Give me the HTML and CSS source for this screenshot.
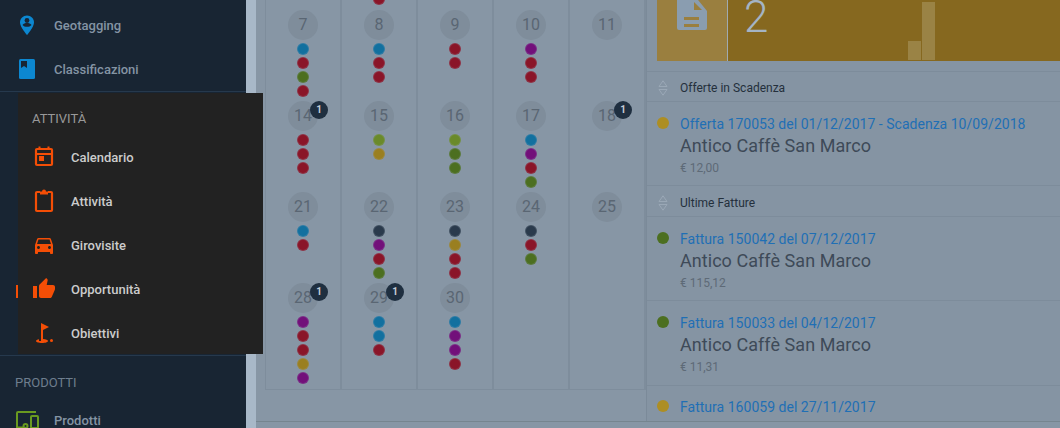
FILE: index.html
```html
<!DOCTYPE html>
<html lang="en">
<head>
    <meta charset="UTF-8">
    <title>dashboard</title>
    <link rel="stylesheet" href="styles.css">
</head>
<body>
    <div class="page">
        <div class="sidebar">
            <div class="side-group first">
                <div class="side-item">
                    <svg class="ico" viewBox="0 0 24 24"><path fill="#0c87d0" d="M12 2.500c-3.900 0-7 3.100-7 7 0 4.600 7 12.500 7 12.500s7-7.900 7-12.500c0-3.900-3.100-7-7-7z"/><circle cx="12" cy="7.500" r="2.400" fill="#182533"/><path fill="#182533" d="M7.500 12c1-1.400 2.700-1.900 4.500-1.900s3.500.5 4.500 1.900c-1 1.300-2.700 1.800-4.500 1.800s-3.500-.5-4.500-1.800z"/></svg>
                    <span>Geotagging</span>
                </div>
                <div class="side-item">
                    <svg class="ico" viewBox="0 0 24 24"><rect x="4" y="2" width="16" height="20" rx="1.500" fill="#0c87d0"/><path fill="#182533" d="M6 4h6v7l-3-2-3 2z"/></svg>
                    <span>Classificazioni</span>
                </div>
            </div>
            <div class="side-group covered">
                <div class="peek"></div>
            </div>
            <div class="side-group">
                <h4 class="side-title">PRODOTTI</h4>
                <div class="side-item">
                    <svg class="ico" viewBox="0 0 24 24" fill="none" stroke="#6a9a20" stroke-width="2"><path d="M21 4H3c-.6 0-1 .4-1 1v14.500h6"/><circle cx="10.500" cy="18" r="2"/><rect x="16" y="8" width="7" height="12" rx="1"/></svg>
                    <span>Prodotti</span>
                </div>
            </div>
        </div>

        <div class="menu">
            <h4 class="menu-title">ATTIVITÀ</h4>
            <div class="menu-item">
                <svg class="ico" viewBox="0 0 24 24"><path fill="none" stroke="#f44e06" stroke-width="2.200" d="M5 4h14a1 1 0 0 1 1 1v14a1 1 0 0 1-1 1H5a1 1 0 0 1-1-1V5a1 1 0 0 1 1-1zM4 9h16"/><path fill="#f44e06" d="M6.500 1.500h2v3h-2zM15.500 1.500h2v3h-2zM7 11h5v5H7z"/></svg>
                <span>Calendario</span>
            </div>
            <div class="menu-item">
                <svg class="ico" viewBox="0 0 24 24"><path fill="none" stroke="#f44e06" stroke-width="2.200" d="M8 3H5a1 1 0 0 0-1 1v17a1 1 0 0 0 1 1h14a1 1 0 0 0 1-1V4a1 1 0 0 0-1-1h-3"/><path fill="#f44e06" d="M8 2.500h2a2 2 0 0 1 4 0h2v3H8z"/></svg>
                <span>Attività</span>
            </div>
            <div class="menu-item">
                <svg class="ico" viewBox="0 0 24 24"><path fill="#f44e06" d="M18.920 6.010C18.720 5.420 18.160 5 17.500 5h-11c-.66 0-1.210.42-1.420 1.010L3 12v8c0 .55.45 1 1 1h1c.55 0 1-.45 1-1v-1h12v1c0 .55.45 1 1 1h1c.55 0 1-.45 1-1v-8l-2.080-5.990zM6.500 16c-.83 0-1.500-.67-1.500-1.500S5.670 13 6.500 13s1.500.67 1.500 1.500S7.330 16 6.500 16zm11 0c-.83 0-1.500-.67-1.500-1.500s.67-1.500 1.500-1.500 1.500.67 1.500 1.500-.67 1.500-1.500 1.500zM5 11l1.500-4.500h11L19 11H5z"/></svg>
                <span>Girovisite</span>
            </div>
            <div class="menu-item">
                <svg class="ico" viewBox="0 0 24 24"><path fill="#f44e06" d="M1 21h4V9H1v12zm22-11c0-1.100-.9-2-2-2h-6.310l.95-4.570.03-.32c0-.41-.17-.79-.44-1.060L14.170 1 7.590 7.590C7.220 7.950 7 8.450 7 9v10c0 1.100.9 2 2 2h9c.83 0 1.540-.5 1.840-1.220l3.020-7.050c.09-.23.14-.47.14-.73v-2z"/></svg>
                <span>Opportunità</span>
            </div>
            <div class="menu-item">
                <svg class="ico" viewBox="0 0 24 24"><circle cx="19.500" cy="19.500" r="1.500" fill="#f44e06"/><path fill="#f44e06" d="M17 5.920L9 2v18H7v-1.730c-1.790.35-3 .99-3 1.730 0 1.100 2.690 2 6 2s6-.9 6-2c0-.99-2.160-1.810-5-1.970V8.980l6-3.060z"/></svg>
                <span>Obiettivi</span>
            </div>
        </div>

        <div class="strip"></div>

        <div class="main">
            <div class="top">
                <div class="calendar">
                    <div class="day"></div>
                    <div class="day"><div class="num"></div><div class="dots"><i class="dot red"></i><i class="dot red"></i><i class="dot red"></i><i class="dot red"></i></div></div>
                    <div class="day"></div>
                    <div class="day"></div>
                    <div class="day"></div>

                    <div class="day"><div class="num">7</div><div class="dots"><i class="dot blue"></i><i class="dot red"></i><i class="dot green"></i><i class="dot red"></i></div></div>
                    <div class="day"><div class="num">8</div><div class="dots"><i class="dot blue"></i><i class="dot red"></i><i class="dot red"></i></div></div>
                    <div class="day"><div class="num">9</div><div class="dots"><i class="dot red"></i><i class="dot red"></i></div></div>
                    <div class="day"><div class="num">10</div><div class="dots"><i class="dot purple"></i><i class="dot red"></i><i class="dot red"></i></div></div>
                    <div class="day"><div class="num">11</div></div>

                    <div class="day"><div class="num">14</div><b class="badge">1</b><div class="dots"><i class="dot red"></i><i class="dot red"></i><i class="dot red"></i></div></div>
                    <div class="day"><div class="num">15</div><div class="dots"><i class="dot olive"></i><i class="dot gold"></i></div></div>
                    <div class="day"><div class="num">16</div><div class="dots"><i class="dot olive"></i><i class="dot green"></i><i class="dot green"></i></div></div>
                    <div class="day"><div class="num">17</div><div class="dots"><i class="dot blue"></i><i class="dot purple"></i><i class="dot red"></i><i class="dot green"></i></div></div>
                    <div class="day"><div class="num">18</div><b class="badge">1</b></div>

                    <div class="day"><div class="num">21</div><div class="dots"><i class="dot blue"></i><i class="dot red"></i></div></div>
                    <div class="day"><div class="num">22</div><div class="dots"><i class="dot navy"></i><i class="dot purple"></i><i class="dot red"></i><i class="dot green"></i></div></div>
                    <div class="day"><div class="num">23</div><div class="dots"><i class="dot navy"></i><i class="dot gold"></i><i class="dot red"></i><i class="dot red"></i></div></div>
                    <div class="day"><div class="num">24</div><div class="dots"><i class="dot navy"></i><i class="dot red"></i><i class="dot green"></i></div></div>
                    <div class="day"><div class="num">25</div></div>

                    <div class="day"><div class="num">28</div><b class="badge">1</b><div class="dots"><i class="dot purple"></i><i class="dot red"></i><i class="dot red"></i><i class="dot gold"></i><i class="dot purple"></i></div></div>
                    <div class="day"><div class="num">29</div><b class="badge">1</b><div class="dots"><i class="dot blue"></i><i class="dot blue"></i><i class="dot red"></i></div></div>
                    <div class="day"><div class="num">30</div><div class="dots"><i class="dot blue"></i><i class="dot purple"></i><i class="dot purple"></i><i class="dot red"></i></div></div>
                    <div class="day"></div>
                    <div class="day"></div>
                </div>

                <div class="panel">
                    <div class="card">
                        <div class="card-icon">
                            <svg width="30" height="40" viewBox="0 0 30 40"><path fill="#8a9db0" d="M2 0h15l13 16v17a2 2 0 0 1-2 2H2a2 2 0 0 1-2-2V2a2 2 0 0 1 2-2z"/><path fill="#9a7f3f" d="M17 7v8h8zM7 22h15v3H7zM7 29h15v3H7z"/></svg>
                        </div>
                        <div class="card-body">
                            <span class="card-num">2</span>
                            <div class="bars">
                                <div class="bar low"></div>
                                <div class="bar high"></div>
                            </div>
                        </div>
                    </div>

                    <div class="list-head open">
                        <svg class="sort" width="10" height="16" viewBox="0 0 10 16" fill="none" stroke="#9aa8b6"><path d="M5 .8L9 6.500H1zM1 9.500h8L5 15.200z"/></svg>
                        <span>Offerte in Scadenza</span>
                    </div>
                    <div class="row">
                        <i class="row-dot gold-l"></i>
                        <div>
                            <div class="row-title">Offerta 170053 del 01/12/2017 - Scadenza 10/09/2018</div>
                            <div class="row-name">Antico Caffè San Marco</div>
                            <div class="row-price">€ 12,00</div>
                        </div>
                    </div>

                    <div class="list-head">
                        <svg class="sort" width="10" height="16" viewBox="0 0 10 16" fill="none" stroke="#9aa8b6"><path d="M5 .8L9 6.500H1zM1 9.500h8L5 15.200z"/></svg>
                        <span>Ultime Fatture</span>
                    </div>
                    <div class="row">
                        <i class="row-dot green"></i>
                        <div>
                            <div class="row-title">Fattura 150042 del 07/12/2017</div>
                            <div class="row-name">Antico Caffè San Marco</div>
                            <div class="row-price">€ 115,12</div>
                        </div>
                    </div>
                    <div class="row wide">
                        <i class="row-dot green"></i>
                        <div>
                            <div class="row-title">Fattura 150033 del 04/12/2017</div>
                            <div class="row-name">Antico Caffè San Marco</div>
                            <div class="row-price">€ 11,31</div>
                        </div>
                    </div>
                    <div class="row last">
                        <i class="row-dot gold-l"></i>
                        <div>
                            <div class="row-title">Fattura 160059 del 27/11/2017</div>
                        </div>
                    </div>
                </div>
            </div>
        </div>
    </div>
</body>
</html>
```

FILE: styles.css
```css
html, body {
    margin: 0;
    height: 100%;
    overflow: hidden;
}
body {
    font-family: Roboto, "Liberation Sans", sans-serif;
    background-color: #8796a5;
}
h4 {
    margin: 0;
    font-weight: 400;
}
.page {
    position: relative;
    display: flex;
    height: 428px;
    overflow: hidden;
}
.ico {
    flex: none;
    width: 24px;
    height: 24px;
}

/* sidebar */
.sidebar {
    flex: none;
    width: 246px;
    height: 428px;
    overflow: hidden;
    background-color: #182533;
    color: #8494a4;
}
.side-group {
    border-bottom: 1px solid #26394d;
}
.side-group:last-child {
    border-bottom: none;
}
.side-group.first {
    padding-top: 3px;
    height: 88px;
}
.side-group.covered {
    height: 263px;
    display: flex;
    align-items: flex-end;
}
.peek {
    width: 2px;
    height: 13px;
    margin: 0 0 57px 16px;
    background-color: #f44e06;
}
.side-title {
    padding: 18px 0 0 15px;
    height: 24px;
    font-size: 13px;
    line-height: 18px;
    color: #6e7e8e;
}
.side-item {
    display: flex;
    align-items: center;
    gap: 15px;
    height: 44px;
    padding-left: 15px;
    font-size: 13px;
    font-weight: 500;
}

/* popup over the sidebar */
.menu {
    position: absolute;
    left: 18px;
    top: 93px;
    box-sizing: border-box;
    width: 245px;
    height: 261px;
    padding-left: 14px;
    background-color: #222;
    color: #ccc;
}
.menu-title {
    padding-top: 17px;
    height: 25px;
    font-size: 13px;
    line-height: 17px;
    color: #999;
}
.menu-item {
    display: flex;
    align-items: center;
    gap: 15px;
    height: 44px;
    font-size: 13px;
    font-weight: 500;
}

.strip {
    flex: none;
    width: 10px;
    background-color: #a8b8c8;
}

/* main */
.main {
    flex: 1;
    min-width: 0;
}
.top {
    display: flex;
    height: 421px;
    overflow: hidden;
    border-bottom: 1px solid #76858f;
}
.calendar {
    flex: none;
    display: grid;
    grid-template-columns: repeat(5, 76px);
    grid-template-rows: repeat(4, 91px) 111px;
    width: 380px;
    margin: -86px 0 0 9px;
    border-left: 1px solid #7e8d9c;
    align-self: flex-start;
    border-bottom: 1px solid #7e8d9c;
}
.day {
    position: relative;
    box-sizing: border-box;
    padding-top: 5px;
    border-right: 2px solid #7e8d9c;
    display: flex;
    flex-direction: column;
    align-items: center;
}
.num {
    width: 30px;
    height: 30px;
    border-radius: 50%;
    background-color: #7f8d9b;
    color: #5a6673;
    font-size: 16px;
    line-height: 30px;
    text-align: center;
}
.badge {
    position: absolute;
    left: 44px;
    top: 5px;
    width: 18px;
    height: 18px;
    border-radius: 50%;
    background-color: #1f2f40;
    color: #c4ccd4;
    font-size: 10px;
    line-height: 18px;
    text-align: center;
}
.dots {
    display: flex;
    flex-direction: column;
    gap: 2px;
    margin-top: 3px;
}
.dot {
    display: block;
    box-sizing: border-box;
    width: 12px;
    height: 12px;
    border: 1px solid rgba(160, 175, 190, .2);
    border-radius: 50%;
}
.blue { background-color: #12709f; }
.red { background-color: #8a1528; }
.green { background-color: #4c6f20; }
.olive { background-color: #6a8a2a; }
.gold { background-color: #9a7f20; }
.purple { background-color: #72107a; }
.navy { background-color: #2a3a4c; }
.gold-l { background-color: #ad8e23; }

/* right panel */
.panel {
    flex: 1;
    min-width: 0;
    border-left: 1px solid #7b8a99;
    background-color: #8594a3;
}
.card {
    display: flex;
    height: 61px;
    margin: 0 0 10px 10px;
    overflow: hidden;
    background-color: #86681f;
}
.card-icon {
    flex: none;
    display: flex;
    justify-content: center;
    align-items: flex-end;
    box-sizing: border-box;
    width: 71px;
    padding-bottom: 26px;
    border-right: 1px solid #a0aab0;
    background-color: #9a7f3f;
}
.card-body {
    flex: 1;
    display: flex;
    padding-left: 16px;
}
.card-num {
    font-size: 44px;
    font-weight: 300;
    line-height: 34px;
    color: #a4b4c4;
}
.bars {
    display: flex;
    align-items: flex-end;
    gap: 1px;
    margin-left: auto;
    margin-right: 125px;
    padding-bottom: 1px;
}
.bar {
    width: 13px;
    background-color: #9a8345;
}
.bar.low {
    height: 19px;
}
.bar.high {
    height: 58px;
}
.list-head {
    display: flex;
    align-items: center;
    gap: 12px;
    box-sizing: border-box;
    height: 31px;
    padding: 3px 0 0 11px;
    border-bottom: 1px solid #7d8c9b;
    font-size: 12px;
    color: #24303c;
}
.list-head.open {
    padding-top: 2px;
    border-top: 1px solid #7d8c9b;
}
.row {
    display: flex;
    gap: 11px;
    box-sizing: border-box;
    height: 84px;
    padding: 12px 0 0 10px;
    border-bottom: 1px solid #7d8c9b;
}
.row.wide {
    height: 85px;
}
.row.last {
    padding-top: 11px;
    border-bottom: none;
}
.row-dot {
    flex: none;
    width: 12px;
    height: 12px;
    margin-top: 3px;
    border-radius: 50%;
}
.row-title {
    font-size: 14px;
    line-height: 20px;
    letter-spacing: .02px;
    color: #1f6fb5;
}
.row-name {
    font-size: 18px;
    line-height: 24px;
    letter-spacing: .05px;
    color: #3e4a58;
}
.row-price {
    font-size: 12px;
    line-height: 20px;
    color: #5e6a77;
}
```
